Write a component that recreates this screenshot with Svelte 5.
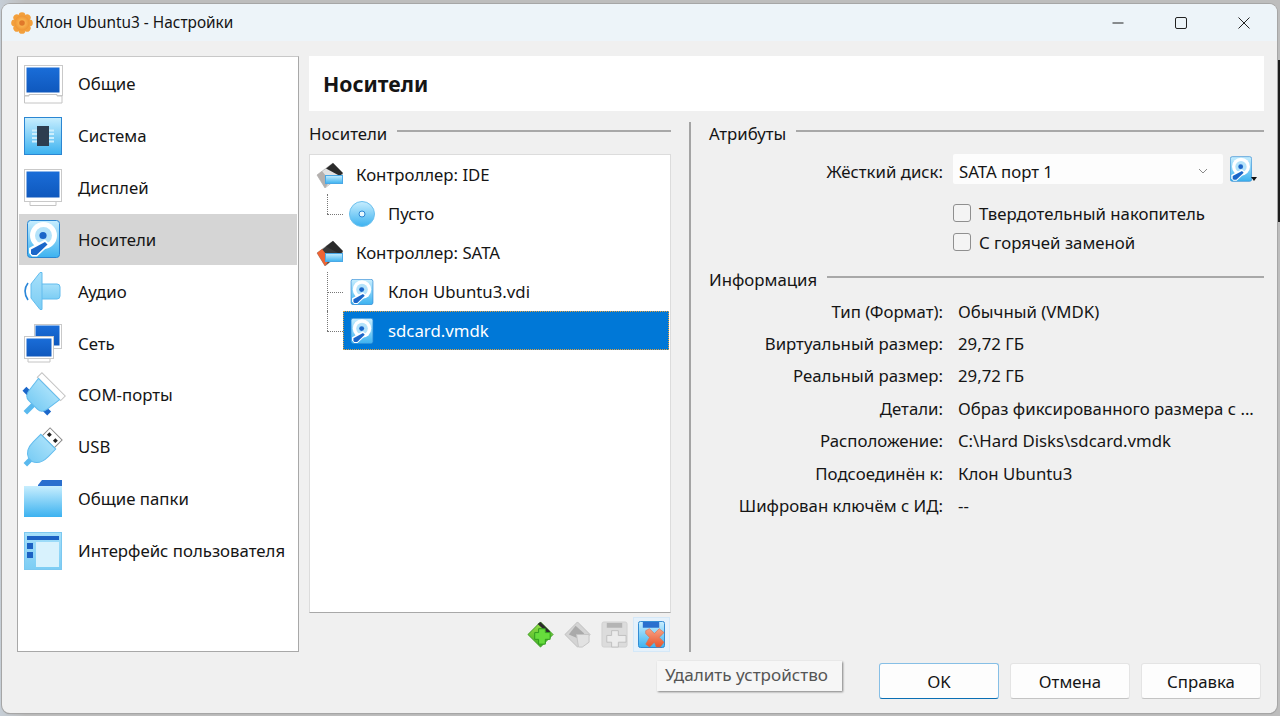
<script lang="ts">
	const pages = [
		{ icon: 'general', label: 'Общие' },
		{ icon: 'system', label: 'Система' },
		{ icon: 'display', label: 'Дисплей' },
		{ icon: 'disk', label: 'Носители', active: true },
		{ icon: 'audio', label: 'Аудио' },
		{ icon: 'network', label: 'Сеть' },
		{ icon: 'com', label: 'COM-порты' },
		{ icon: 'usb', label: 'USB' },
		{ icon: 'folder', label: 'Общие папки' },
		{ icon: 'ui', label: 'Интерфейс пользователя' }
	];

	const info = [
		['Тип (Формат):', 'Обычный (VMDK)'],
		['Виртуальный размер:', '29,72 ГБ'],
		['Реальный размер:', '29,72 ГБ'],
		['Детали:', 'Образ фиксированного размера с ...'],
		['Расположение:', 'C:\\Hard Disks\\sdcard.vmdk'],
		['Подсоединён к:', 'Клон Ubuntu3'],
		['Шифрован ключём с ИД:', '--']
	];
</script>

{#snippet diskArt()}
	<rect x="0.5" y="0.5" width="32" height="37" rx="3" fill="url(#skyfill)" stroke="#2b86d2" />
	<circle cx="16.5" cy="15.5" r="13.5" fill="#fff" />
	<circle cx="16.5" cy="15.5" r="8.5" fill="#b4e3fa" />
	<path d="M2 33 L2 28 L18 19.5 L23 24.5 L10 36.5 L5 36.5 Z" fill="#fff" />
	<circle cx="16" cy="15.5" r="3.6" fill="#1b66c9" />
	<path d="M4 33.5 L4 29.5 L18 22 L20.5 24.5 L9.5 35 L5.5 35 Z" fill="#1b66c9" />
{/snippet}

{#snippet pageIcon(name: string)}
	<svg class="page-icon" viewBox="0 0 38 38">
		{#if name === 'general'}
			<rect x="0.5" y="0.5" width="38" height="30" fill="#fff" stroke="#c9c9c9" />
			<rect x="2.5" y="2.5" width="33" height="25" fill="url(#bluefill)" />
			<path d="M0.5 31 H5 V29.5 H33 V31 H38 V38 H0.5 Z" fill="#fff" stroke="#c4c4c4" />
		{:else if name === 'system'}
			<rect x="0.5" y="0.5" width="37" height="37" fill="url(#skyfill)" stroke="#2b86d2" />
			<path d="M8 13.5 H30 M8 17 H30 M8 21 H30 M8 24.5 H30" stroke="#cdeefc" stroke-width="2" />
			<rect x="13" y="9" width="12" height="20" fill="#2d3d50" />
		{:else if name === 'display'}
			<rect x="0.5" y="0.5" width="37" height="32" fill="#fff" stroke="#c9c9c9" />
			<rect x="2.5" y="2.5" width="33" height="26" fill="url(#bluefill)" />
			<path d="M6 33 V36.5 H32 V33" fill="#fff" stroke="#c4c4c4" />
		{:else if name === 'disk'}
			<svg x="3" y="0" width="33" height="38" viewBox="0 0 33 38">
				{@render diskArt()}
			</svg>
		{:else if name === 'audio'}
			<path d="M17.5 12 H33 Q36 12 36 15 V24 Q36 27 33 27 H17.5 Z" fill="url(#palefill)" stroke="#62bcee" />
			<path d="M7 12 L16 0.5 H18 V37.5 H16 L7 26 Z" fill="url(#palefill)" stroke="#62bcee" />
			<path d="M4 11 Q-2 19 4 28" fill="none" stroke="#2a86d8" stroke-width="1.6" />
		{:else if name === 'network'}
			<rect x="10.5" y="0.5" width="27" height="24" fill="#fff" stroke="#c9c9c9" />
			<rect x="11.5" y="1.5" width="24" height="20" fill="url(#bluefill)" />
			<rect x="0.5" y="12.5" width="29" height="22" fill="#fff" stroke="#c9c9c9" />
			<rect x="2.5" y="14.5" width="25" height="18" fill="url(#bluefill)" />
			<path d="M4 35 V38 H26 V35" fill="#fff" stroke="#c4c4c4" />
		{:else if name === 'com'}
			<g transform="rotate(45 19 19)">
				<rect x="2.5" y="4" width="33" height="6.5" fill="#fff" stroke="#c4c4c4" />
				<rect x="16.5" y="32" width="5" height="12" fill="#5ab9ee" />
				<rect x="1.5" y="25" width="7" height="5.5" fill="#1b66c9" />
				<rect x="29.5" y="25" width="7" height="5.5" fill="#1b66c9" />
				<path d="M4 10.5 H34 L32 26 Q31 33 25 33 H13 Q7 33 6 26 Z" fill="url(#palefill)" stroke="#62bcee" />
			</g>
		{:else if name === 'usb'}
			<g transform="rotate(45 19 19)">
				<rect x="10.5" y="0.5" width="17" height="11" fill="#fff" stroke="#8a8a8a" />
				<rect x="13" y="4" width="3.5" height="3.5" fill="#222" />
				<rect x="21.5" y="4" width="3.5" height="3.5" fill="#222" />
				<path d="M8.5 11.5 H29.5 V22 Q29.5 34 21.5 37 H16.5 Q8.5 34 8.5 22 Z" fill="url(#palefill)" stroke="#62bcee" />
				<rect x="16.5" y="37" width="5" height="7" fill="#5ab9ee" />
			</g>
		{:else if name === 'folder'}
			<path d="M14 5 L18 0 H38 V6 H14 Z" fill="#2a6fce" />
			<rect x="0" y="6" width="38" height="31" fill="url(#skyfill)" />
		{:else if name === 'ui'}
			<rect x="0.5" y="0.5" width="37" height="37" fill="url(#palefill)" stroke="#7cc8f0" />
			<rect x="3" y="4" width="32" height="4" fill="#1c62c4" />
			<rect x="3" y="11" width="6" height="6" fill="#1c62c4" />
			<rect x="3" y="20" width="6" height="6" fill="#1c62c4" />
			<rect x="12" y="10" width="23" height="25" fill="#d8f2fd" />
		{/if}
	</svg>
{/snippet}

{#snippet controllerIcon(accent: string, top: string)}
	<svg class="tree-icon" viewBox="0 0 27 27">
		<path d="M1 14 L17 2 L27 13 L9 27 Z" fill={top} stroke="#a8a8a8" stroke-width="0.6" />
		<path d="M1 14 L6 10 L14 20 L9 27 Z" fill={accent} />
		<path d="M10 7.5 L17 2 L27 12 L24 15 Z" fill="#2b2b2b" />
		<rect x="9.5" y="14.5" width="17" height="8" fill="url(#skyfill)" stroke="#4aa8e6" />
	</svg>
{/snippet}

<svg class="defs" width="0" height="0" aria-hidden="true">
	<defs>
		<linearGradient id="bluefill" x1="0" y1="0" x2="0" y2="1">
			<stop offset="0" stop-color="#1a6dd8" />
			<stop offset="1" stop-color="#0f58bd" />
		</linearGradient>
		<linearGradient id="skyfill" x1="0" y1="0" x2="0" y2="1">
			<stop offset="0" stop-color="#c8eefe" />
			<stop offset="1" stop-color="#3cb2f0" />
		</linearGradient>
		<linearGradient id="palefill" x1="0" y1="0" x2="0" y2="1">
			<stop offset="0" stop-color="#a6e0fa" />
			<stop offset="1" stop-color="#7ccdf4" />
		</linearGradient>
		<linearGradient id="greenfill" x1="0" y1="0" x2="0" y2="1">
			<stop offset="0" stop-color="#9be04a" />
			<stop offset="1" stop-color="#3caf22" />
		</linearGradient>
		<linearGradient id="redfill" x1="0" y1="0" x2="0" y2="1">
			<stop offset="0" stop-color="#f7a184" />
			<stop offset="1" stop-color="#e8552c" />
		</linearGradient>
		<radialGradient id="orangefill">
			<stop offset="0" stop-color="#ffc860" />
			<stop offset="1" stop-color="#ef9434" />
		</radialGradient>
	</defs>
</svg>

<div class="desktop">
	<div class="edge-dark"></div>
	<div class="window">
		<header class="titlebar">
			<svg class="app-icon" viewBox="0 0 22 22">
				{#each [0, 45, 90, 135, 180, 225, 270, 315] as deg}
					<circle cx="11" cy="3.6" r="3.4" fill="#f3a03c" transform="rotate({deg} 11 11)" />
				{/each}
				<circle cx="11" cy="11" r="7.5" fill="url(#orangefill)" />
				<circle cx="11" cy="11" r="2.8" fill="#e0782a" />
			</svg>
			<span class="title">Клон Ubuntu3 - Настройки</span>
			<div class="controls">
				<svg viewBox="0 0 12 12"><path d="M0.5 6 H11.5" stroke="#222" fill="none" /></svg>
				<svg viewBox="0 0 12 12"><rect x="0.5" y="0.5" width="11" height="11" rx="1.5" stroke="#222" fill="none" /></svg>
				<svg viewBox="0 0 12 12"><path d="M0.5 0.5 L11.5 11.5 M11.5 0.5 L0.5 11.5" stroke="#222" fill="none" /></svg>
			</div>
		</header>

		<div class="body">
			<nav class="sidebar">
				{#each pages as page}
					<div class="page" class:active={page.active}>
						{@render pageIcon(page.icon)}
						<span>{page.label}</span>
					</div>
				{/each}
			</nav>

			<main class="main">
				<div class="page-header">Носители</div>
				<div class="columns">
					<section class="storage">
						<div class="heading"><span>Носители</span><i></i></div>
						<div class="tree">
							<div class="row">
								{@render controllerIcon('#b4b0ae', '#e2e2e2')}
								<span>Контроллер: IDE</span>
							</div>
							<div class="row child">
								<span class="branch"></span>
								<div class="node">
									<svg class="leaf-icon" viewBox="0 0 26 26">
										<circle cx="13" cy="13" r="12.5" fill="url(#skyfill)" stroke="#6cc0ee" />
										<circle cx="13" cy="13" r="3" fill="#e6f7fe" stroke="#2b86d2" />
									</svg>
									<span>Пусто</span>
								</div>
							</div>
							<div class="row">
								{@render controllerIcon('#ee6434', '#3a3a3a')}
								<span>Контроллер: SATA</span>
							</div>
							<div class="row child">
								<span class="branch through"></span>
								<div class="node">
									<svg class="leaf-icon" viewBox="0 0 33 38">{@render diskArt()}</svg>
									<span>Клон Ubuntu3.vdi</span>
								</div>
							</div>
							<div class="row child">
								<span class="branch"></span>
								<div class="node selected">
									<svg class="leaf-icon" viewBox="0 0 33 38">{@render diskArt()}</svg>
									<span>sdcard.vmdk</span>
								</div>
							</div>
						</div>
						<div class="toolbar">
							<button aria-label="Добавить контроллер">
								<svg viewBox="0 0 28 28">
									<path d="M1 14 L14 1 L27 14 L14 27 Z" fill="url(#greenfill)" stroke="#3a9a20" />
									<path d="M11 3 L14 1 L24 11 L22 13 Z" fill="#2b2b2b" />
									<path d="M12 8 H19 V12 H24 V19 H19 V24 H12 V19 H8 V12 H12 Z" fill="#66dc3c" stroke="#2f9a1e" />
								</svg>
							</button>
							<button aria-label="Удалить контроллер">
								<svg viewBox="0 0 28 28">
									<path d="M1 14 L14 1 L27 14 L14 27 Z" fill="#d4d4d4" stroke="#bdbdbd" />
									<path d="M5 14 L12 5 L21 13 L14 18 Z" fill="#aaa" />
									<path d="M13 14 H26 V22 L19 27 H15 Z" fill="#e2e2e2" stroke="#c4c4c4" />
								</svg>
							</button>
							<button aria-label="Добавить устройство">
								<svg viewBox="0 0 28 28">
									<rect x="1" y="1" width="26" height="26" rx="2" fill="#dcdcdc" stroke="#d0d0d0" />
									<rect x="6" y="2" width="16" height="5" fill="#b4b4b4" />
									<path d="M11 10 H18 V15 H26 V22 H18 V27 H11 V22 H6 V15 H11 Z" fill="#ececec" stroke="#c0c0c0" />
								</svg>
							</button>
							<button class="hover" aria-label="Удалить устройство">
								<svg viewBox="0 0 28 28">
									<rect x="0.5" y="0.5" width="27" height="27" rx="2" fill="url(#skyfill)" stroke="#2b86d2" />
									<rect x="5" y="1" width="17" height="6" fill="#2a6fce" />
									<path d="M8 10 L12 8 L17 13 L22 8 L27 12 L22 17 L27 22 L23 27 H19 L17 22 L12 27 L8 24 L12 17 L8 13 Z" fill="url(#redfill)" stroke="#dc6a46" stroke-width="0.6" />
								</svg>
							</button>
						</div>
					</section>

					<div class="splitter"></div>

					<section class="details">
						<div class="heading"><span>Атрибуты</span><i></i></div>
						<div class="attr-row">
							<label class="attr-label" for="port">Жёсткий диск:</label>
							<div id="port" class="combo">
								<span>SATA порт 1</span>
								<svg viewBox="0 0 10 6"><path d="M1 1 L5 5 L9 1" fill="none" stroke="#8a8a8a" /></svg>
							</div>
							<div class="disk-button">
								<svg viewBox="0 0 33 38">{@render diskArt()}</svg>
								<b></b>
							</div>
						</div>
						<div class="check"><span class="box"></span>Твердотельный накопитель</div>
						<div class="check second"><span class="box"></span>С горячей заменой</div>

						<div class="heading info-heading"><span>Информация</span><i></i></div>
						<dl class="info">
							{#each info as [key, value]}
								<dt>{key}</dt>
								<dd>{value}</dd>
							{/each}
						</dl>
					</section>
				</div>
			</main>
		</div>

		<footer class="footer">
			<button class="primary">OK</button>
			<button>Отмена</button>
			<button>Справка</button>
			<div class="tooltip">Удалить устройство</div>
		</footer>
	</div>
</div>

<style>
	:global(body) {
		margin: 0;
		background: #bdbdbd;
	}

	.defs {
		position: absolute;
	}

	.desktop {
		position: relative;
		box-sizing: border-box;
		width: 1280px;
		height: 716px;
		padding: 4px 3px 3px 2px;
		background: linear-gradient(90deg, #c6ced6 0, #bdbdbd 2%, #bdbdbd 100%);
		font-family: 'Noto Sans', sans-serif;
		font-size: 16.8px;
		color: #151515;
		overflow: hidden;
	}

	.edge-dark {
		position: absolute;
		right: 0;
		top: 60px;
		width: 4px;
		height: 162px;
		background: #1d1d1d;
	}

	.window {
		position: relative;
		box-sizing: border-box;
		height: 100%;
		display: flex;
		flex-direction: column;
		background: #f0f0f0;
		border-radius: 8px;
		box-shadow: 0 0 0 1px #a6a6a6, 0 1px 1px #8c8c8c;
	}

	.titlebar {
		flex: 0 0 37px;
		display: flex;
		align-items: center;
		padding-left: 9px;
		background: #edf4f9;
		border-radius: 8px 8px 0 0;
	}

	.app-icon {
		width: 22px;
		height: 22px;
		margin-right: 2px;
	}

	.title {
		flex: 1;
		font-size: 15.4px;
	}

	.controls {
		display: flex;
		gap: 51px;
		padding-right: 27px;
	}

	.controls svg {
		width: 12px;
		height: 12px;
	}

	.body {
		flex: 1;
		display: flex;
		gap: 10px;
		padding: 15px 13px 0 15px;
		min-height: 0;
	}

	.sidebar {
		box-sizing: border-box;
		flex: 0 0 282px;
		height: 596px;
		padding: 1px 1px;
		background: #fff;
		border: 1px solid #a8a8a8;
		border-top-color: #c8c8c8;
	}

	.page {
		display: flex;
		align-items: center;
		gap: 16px;
		height: 51.85px;
		padding-left: 5px;
	}

	.page.active {
		background: #d5d5d5;
	}

	.page-icon {
		flex: none;
		width: 38px;
		height: 38px;
		overflow: visible;
	}

	.main {
		flex: 1;
		display: flex;
		flex-direction: column;
		min-width: 0;
	}

	.page-header {
		flex: 0 0 55px;
		display: flex;
		align-items: center;
		padding-left: 14px;
		background: #fff;
		font-size: 21.2px;
		font-weight: 700;
	}

	.columns {
		display: flex;
		height: 530px;
		margin-top: 11px;
	}

	.storage {
		flex: 0 0 362px;
		display: flex;
		flex-direction: column;
	}

	.splitter {
		flex: 0 0 2px;
		margin: 0 18px 0 18px;
		background: #a4a4a4;
	}

	.details {
		flex: 1;
		min-width: 0;
	}

	.heading {
		display: flex;
		align-items: center;
		gap: 10px;
		height: 22px;
	}

	.heading i {
		flex: 1;
		height: 2px;
		margin-top: -4px;
		background: #a8a8a8;
	}

	.tree {
		box-sizing: border-box;
		height: 459px;
		margin-top: 10px;
		background: #fff;
		border: 1px solid #dcdcdc;
		border-bottom-color: #a8a8a8;
	}

	.row {
		display: flex;
		align-items: center;
		gap: 13px;
		height: 39px;
		padding-left: 6px;
	}

	.row.child {
		gap: 0;
		padding-left: 17px;
	}

	.tree-icon {
		flex: none;
		width: 27px;
		height: 27px;
	}

	.leaf-icon {
		flex: none;
		width: 26px;
		height: 26px;
	}

	.branch {
		position: relative;
		flex: 0 0 16px;
		align-self: stretch;
	}

	.branch::before {
		content: '';
		position: absolute;
		left: 0;
		top: 0;
		height: 50%;
		border-left: 1px dotted #777;
	}

	.branch.through::before {
		height: 100%;
	}

	.branch::after {
		content: '';
		position: absolute;
		left: 0;
		top: 50%;
		width: 100%;
		border-top: 1px dotted #777;
	}

	.node {
		flex: 1;
		display: flex;
		align-items: center;
		gap: 13px;
		align-self: stretch;
		padding-left: 6px;
		margin-right: 1px;
	}

	.node.selected {
		background: #0078d7;
		color: #fff;
		outline: 1px dotted #e0a040;
		outline-offset: -1px;
	}

	.toolbar {
		display: flex;
		justify-content: flex-end;
		margin-top: 4px;
		padding-right: 1px;
	}

	.toolbar button {
		box-sizing: border-box;
		display: flex;
		align-items: center;
		justify-content: center;
		width: 37px;
		height: 35px;
		padding: 0;
		background: none;
		border: 1px solid transparent;
	}

	.toolbar button.hover {
		background: #e5f1fb;
		border-color: #d4e8f8;
	}

	.toolbar svg {
		display: block;
		width: 27px;
		height: 27px;
	}

	.attr-row {
		display: flex;
		align-items: center;
		height: 30px;
		margin-top: 10px;
	}

	.attr-label {
		flex: 0 0 234px;
		padding-top: 4px;
		text-align: right;
	}

	.combo {
		flex: 0 0 270px;
		box-sizing: border-box;
		height: 30px;
		display: flex;
		align-items: center;
		justify-content: space-between;
		margin-left: 10px;
		padding: 4px 15px 0 6px;
		background: #fdfdfd;
		border-radius: 2px;
	}

	.combo svg {
		width: 10px;
		height: 6px;
	}

	.disk-button {
		position: relative;
		width: 22px;
		height: 26px;
		margin-left: 7px;
	}

	.disk-button svg {
		display: block;
		width: 22px;
		height: 26px;
	}

	.disk-button b {
		position: absolute;
		right: -5px;
		bottom: 1px;
		border: 3px solid transparent;
		border-top: 4px solid #111;
		border-bottom: 0;
	}

	.check {
		display: flex;
		align-items: center;
		gap: 8px;
		height: 18px;
		margin: 20px 0 0 244px;
	}

	.check.second {
		margin-top: 11px;
	}

	.box {
		box-sizing: border-box;
		width: 18px;
		height: 18px;
		background: #f4f4f4;
		border: 1px solid #8f8f8f;
		border-radius: 3px;
	}

	.info-heading {
		margin-top: 17px;
	}

	.info {
		display: grid;
		grid-template-columns: 234px 1fr;
		grid-auto-rows: 32.4px;
		align-items: center;
		column-gap: 15px;
		margin: 5px 0 0;
	}

	.info dt {
		text-align: right;
	}

	.info dd {
		margin: 0;
	}

	.footer {
		position: relative;
		flex: 0 0 61px;
		display: flex;
		justify-content: flex-end;
		gap: 11px;
		padding: 11px 16px 0 0;
		box-sizing: border-box;
	}

	.footer button {
		box-sizing: border-box;
		width: 120px;
		height: 36px;
		background: #fdfdfd;
		border: 1px solid #e4e4e4;
		border-bottom-color: #c4c4c4;
		border-radius: 3px;
		font: inherit;
		color: inherit;
	}

	.footer button.primary {
		border-color: #86bfe6;
		border-bottom-color: #0a6fb4;
	}

	.tooltip {
		position: absolute;
		left: 655px;
		top: 9px;
		box-sizing: border-box;
		width: 185px;
		height: 30px;
		padding-left: 8px;
		font-size: 17.1px;
		line-height: 27px;
		background: #f6f6f6;
		color: #555;
		box-shadow: 1px 1px 2px #808080;
	}
</style>
